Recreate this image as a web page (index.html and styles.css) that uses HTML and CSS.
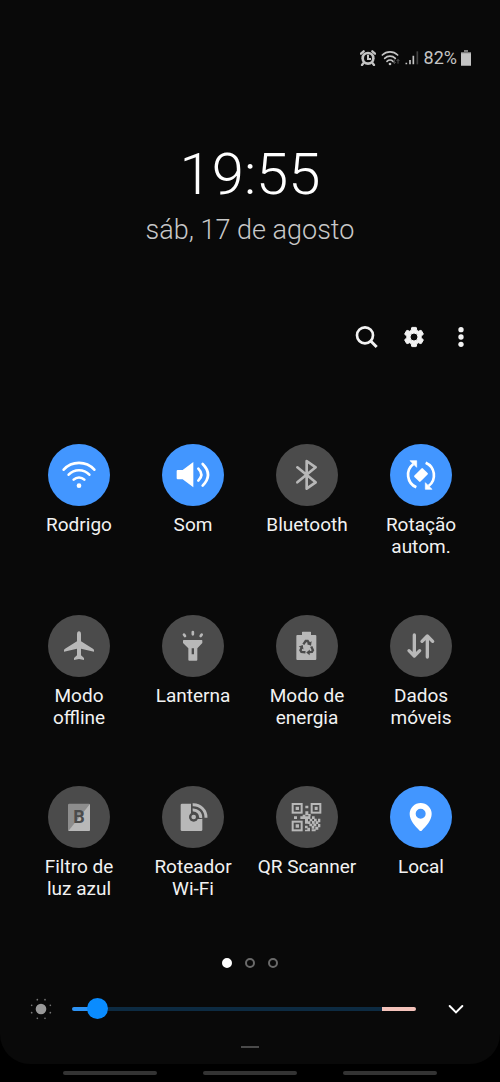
FILE: index.html
```html
<!DOCTYPE html>
<html lang="pt-BR">
<head>
<meta charset="utf-8">
<meta name="viewport" content="width=device-width, initial-scale=1">
<title>Painel rápido</title>
<link rel="stylesheet" href="styles.css">
</head>
<body>
<main class="panel">
  <header class="status">
    <svg class="status-alarm" viewBox="0 0 48 48" width="16" height="16" aria-hidden="true">
      <circle cx="24" cy="25" r="20" fill="currentColor"/>
      <path d="M3 11L11 4M45 11L37 4M10 40L6 45M38 40L42 45" stroke="currentColor" stroke-width="7" stroke-linecap="round"/>
      <circle cx="24" cy="25" r="12" fill="#090909"/>
      <path d="M24 14V27H33" fill="none" stroke="currentColor" stroke-width="6"/>
    </svg>
    <svg class="status-wifi" viewBox="0 0 57 48" width="19" height="16" aria-hidden="true">
      <g fill="none" stroke="currentColor" stroke-width="5" stroke-linecap="round">
        <path d="M4 15A33 33 0 0 1 50 15M11 25A23 23 0 0 1 43 25M18 34A13 13 0 0 1 36 34"/>
      </g>
      <circle cx="27" cy="42" r="4" fill="currentColor"/>
      <path d="M40 28V40M36 36L40 41L44 36M51 41V29M47 33L51 28L55 33" fill="none" stroke="#555" stroke-width="3"/>
    </svg>
    <svg class="status-signal" viewBox="0 0 42 48" width="14" height="16" aria-hidden="true">
      <path d="M4 38V43M15 30V43M25 17V43" stroke="currentColor" stroke-width="5"/>
      <path d="M37 4V43" stroke="#444" stroke-width="5"/>
    </svg>
    <span class="status-text">82%</span>
    <svg viewBox="0 0 30 48" width="10" height="16" aria-hidden="true">
      <path d="M9 1H21V6H30V47H0V6H9Z" fill="currentColor"/>
      <path d="M9 1H21V6H30V10H0V6H9Z" fill="#777"/>
    </svg>
  </header>

  <section class="clock">
    <time class="clock-time">19:55</time>
    <p class="clock-date">sáb, 17 de agosto</p>
  </section>

  <nav class="actions" aria-label="Ações">
    <button class="action" type="button" aria-label="Pesquisar">
      <svg viewBox="0 0 72 72" width="24" height="24"><circle cx="30" cy="31" r="24" fill="none" stroke="currentColor" stroke-width="8"/><path d="M47 48L65 66" stroke="currentColor" stroke-width="9"/></svg>
    </button>
    <button class="action" type="button" aria-label="Configurações">
      <svg viewBox="0 0 24 24" width="24" height="24"><path fill="currentColor" stroke="currentColor" stroke-width="1" stroke-linejoin="round" d="M19.14 12.94c.04-.3.06-.61.06-.94 0-.32-.02-.64-.07-.94l2.03-1.580c.18-.14.23-.41.12-.61l-1.920-3.320c-.12-.22-.37-.29-.59-.22l-2.390.96c-.5-.38-1.030-.7-1.620-.94l-.36-2.540c-.04-.24-.24-.41-.48-.41h-3.840c-.24 0-.43.17-.47.41l-.36 2.540c-.59.24-1.130.57-1.620.94l-2.390-.96c-.22-.08-.47 0-.59.22L2.740 8.870c-.12.21-.08.47.12.61l2.030 1.580c-.05.3-.09.63-.09.94s.02.64.07.94l-2.030 1.580c-.18.14-.23.41-.12.61l1.920 3.320c.12.22.37.29.59.22l2.390-.96c.5.38 1.030.7 1.620.94l.36 2.540c.05.24.24.41.48.41h3.840c.24 0 .44-.17.47-.41l.36-2.540c.59-.24 1.130-.56 1.620-.94l2.390.96c.22.08.47 0 .59-.22l1.920-3.320c.12-.22.07-.47-.12-.61l-2.010-1.580zM12 16a4 4 0 1 1 0-8 4 4 0 0 1 0 8z"/></svg>
    </button>
    <button class="action" type="button" aria-label="Mais opções">
      <svg viewBox="0 0 72 72" width="24" height="24" fill="currentColor"><circle cx="36" cy="14" r="8"/><circle cx="36" cy="36" r="8"/><circle cx="36" cy="58" r="8"/></svg>
    </button>
  </nav>

  <section class="tiles" aria-label="Configurações rápidas">
    <button class="tile tile-on" type="button" aria-pressed="true">
      <svg class="tile-icon" viewBox="0 0 186 186" aria-hidden="true">
        <path d="M47 77A62 62 0 0 1 139 77M62 92A43 43 0 0 1 124 92M77 107A23 23 0 0 1 109 107" fill="none" stroke="currentColor" stroke-width="8" stroke-linecap="round"/>
        <circle cx="93" cy="125" r="7" fill="currentColor"/>
      </svg>
      <span class="tile-label">Rodrigo</span>
    </button>
    <button class="tile tile-on" type="button" aria-pressed="true">
      <svg class="tile-icon" viewBox="0 0 186 186" aria-hidden="true">
        <path d="M47 78H62L94 54V130L62 106H47Q44 106 44 103V81Q44 78 47 78Z" fill="currentColor"/>
        <path d="M109 74Q127 92 109 110M122 60Q154 92 122 125" fill="none" stroke="currentColor" stroke-width="8" stroke-linecap="round"/>
      </svg>
      <span class="tile-label">Som</span>
    </button>
    <button class="tile" type="button" aria-pressed="false">
      <svg class="tile-icon" viewBox="0 0 186 186" aria-hidden="true">
        <path d="M64 70L119 115L92 134V51L119 70L64 115" fill="none" stroke="currentColor" stroke-width="8" stroke-linecap="round" stroke-linejoin="round"/>
      </svg>
      <span class="tile-label">Bluetooth</span>
    </button>
    <button class="tile tile-on" type="button" aria-pressed="true">
      <svg class="tile-icon" viewBox="0 0 186 186" aria-hidden="true">
        <rect x="75" y="80" width="36" height="26" rx="3" transform="rotate(-45 93 93)" fill="currentColor"/>
        <g id="turn">
          <path d="M79 130A41 41 0 0 1 70 60" fill="none" stroke="currentColor" stroke-width="8"/>
          <path d="M60 50H80V70Z" fill="currentColor" stroke="currentColor" stroke-width="2" stroke-linejoin="round"/>
        </g>
        <use href="#turn" transform="rotate(180 93 93)"/>
      </svg>
      <span class="tile-label">Rotação autom.</span>
    </button>

    <button class="tile" type="button" aria-pressed="false">
      <svg class="tile-icon" viewBox="0 0 186 186" aria-hidden="true">
        <path d="M93 49Q99 49 99 59V79L136 102Q139 104 138 110L99 101V121L108 129V135L93 132L78 135V129L87 121V101L48 110Q47 104 50 102L87 79V59Q87 49 93 49Z" fill="currentColor"/>
      </svg>
      <span class="tile-label">Modo offline</span>
    </button>
    <button class="tile" type="button" aria-pressed="false">
      <svg class="tile-icon" viewBox="0 0 186 186" aria-hidden="true">
        <path fill-rule="evenodd" d="M65 75H119Q121 75 121 77V84L106 100V134Q106 137 103 137H82Q79 137 79 134V100L63 84V77Q63 75 65 75ZM89 100V118H96V100Z" fill="currentColor"/>
        <path d="M92.500 51V58M66 59L69 63M119 59L116 63" stroke="currentColor" stroke-width="8" stroke-linecap="round"/>
      </svg>
      <span class="tile-label">Lanterna</span>
    </button>
    <button class="tile" type="button" aria-pressed="false">
      <svg class="tile-icon" viewBox="0 0 186 186" aria-hidden="true">
        <path d="M80 50H103Q105 50 105 52V60H118Q121 60 121 63V132Q121 135 118 135H64Q61 135 61 132V63Q61 60 64 60H78V52Q78 50 80 50Z" fill="currentColor"/>
        <g id="recycle" fill="none" stroke="#4b4b4b" stroke-width="7">
          <path d="M82 88L89 78H95L101 87"/>
          <path d="M92 87L105 92L107 79Z" fill="#4b4b4b" stroke="none"/>
        </g>
        <use href="#recycle" transform="rotate(120 92 98)"/>
        <use href="#recycle" transform="rotate(240 92 98)"/>
      </svg>
      <span class="tile-label">Modo de energia</span>
    </button>
    <button class="tile" type="button" aria-pressed="false">
      <svg class="tile-icon" viewBox="0 0 186 186" aria-hidden="true">
        <path d="M73 60V122M57 107L73 123L89 107M112 126V64M96 79L112 63L128 79" fill="none" stroke="currentColor" stroke-width="10" stroke-linecap="round" stroke-linejoin="round"/>
      </svg>
      <span class="tile-label">Dados móveis</span>
    </button>

    <button class="tile" type="button" aria-pressed="false">
      <svg class="tile-icon" viewBox="0 0 186 186" aria-hidden="true">
        <rect x="60" y="53" width="66" height="82" rx="4" fill="#8d8d8d"/>
        <path d="M126 54V131Q126 135 122 135H61Z" fill="currentColor"/>
        <text class="tile-letter" x="93" y="112" text-anchor="middle">B</text>
      </svg>
      <span class="tile-label">Filtro de luz&nbsp;azul</span>
    </button>
    <button class="tile" type="button" aria-pressed="false">
      <svg class="tile-icon" viewBox="0 0 186 186" aria-hidden="true">
        <rect x="56" y="53" width="65" height="82" rx="4" fill="currentColor"/>
        <path d="M87 50H136V99H95L87 85Z" fill="#4b4b4b"/>
        <circle cx="95" cy="93" r="14" fill="#4b4b4b"/>
        <circle cx="95" cy="93" r="7" fill="currentColor"/>
        <path d="M92 72A22 22 0 0 1 116 96M92 56A38 38 0 0 1 132 95" fill="none" stroke="currentColor" stroke-width="9"/>
      </svg>
      <span class="tile-label">Roteador Wi-Fi</span>
    </button>
    <button class="tile" type="button" aria-pressed="false">
      <svg class="tile-icon" viewBox="0 0 186 186" aria-hidden="true">
        <g fill="none" stroke="currentColor" stroke-width="6"><rect x="50" y="54" width="27" height="26"/><rect x="107" y="54" width="26" height="26"/><rect x="50" y="107" width="27" height="26"/></g>
        <path fill="currentColor" d="M59 62h10v10h-10zM116 62h9v10h-9zM59 115h10v10h-10zM88 59h9v8h-9zM88 76h9v12h-9zM54 91h9v8h-9zM73 91h30v8h-30zM108 91h8v8h-8zM80 86h8v7h-8zM97 84h7v7h-7zM87 98h9v15h-9zM101 98h8v8h-8zM114 98h8v8h-8zM126 98h7v11h-7zM95 106h8v8h-8zM108 105h8v8h-8zM119 106h8v8h-8zM87 119h8v8h-8zM100 113h9v8h-9zM112 113h9v8h-9zM126 114h7v10h-7zM94 125h8v11h-8zM107 120h8v8h-8zM118 122h9v9h-9zM107 130h12v6h-12zM87 131h7v5h-7z"/>
      </svg>
      <span class="tile-label">QR Scanner</span>
    </button>
    <button class="tile tile-on" type="button" aria-pressed="true">
      <svg class="tile-icon" viewBox="0 0 186 186" aria-hidden="true">
        <path fill-rule="evenodd" d="M92 51A33 33 0 0 1 125 84C125 103 109 120 95 134Q92 136 89 134C75 120 59 103 59 84A33 33 0 0 1 92 51ZM92 68A15 15 0 1 0 92 98A15 15 0 1 0 92 68Z" fill="currentColor"/>
      </svg>
      <span class="tile-label">Local</span>
    </button>
  </section>

  <div class="pages" aria-label="Página 1 de 3">
    <span class="page page-current"></span>
    <span class="page"></span>
    <span class="page"></span>
  </div>

  <div class="brightness">
    <svg viewBox="0 0 66 66" width="22" height="22" aria-hidden="true">
      <circle cx="33" cy="33" r="16" fill="#999"/>
      <g fill="#777"><circle cx="22" cy="5" r="2.500"/><circle cx="45" cy="5" r="2.500"/><circle cx="5" cy="22" r="2.500"/><circle cx="61" cy="22" r="2.500"/><circle cx="5" cy="44" r="2.500"/><circle cx="61" cy="44" r="2.500"/><circle cx="22" cy="61" r="2.500"/><circle cx="45" cy="61" r="2.500"/></g>
    </svg>
    <input class="slider" type="range" min="0" max="1000" value="45" aria-label="Brilho">
    <button class="expand" type="button" aria-label="Expandir">
      <svg viewBox="0 0 48 48" width="16" height="16"><path d="M5 15L24 34L43 15" fill="none" stroke="currentColor" stroke-width="6" stroke-linecap="round"/></svg>
    </button>
  </div>
  <div class="handle"></div>
</main>
<footer class="gestures">
  <span class="gesture"></span>
  <span class="gesture"></span>
  <span class="gesture"></span>
</footer>
</body>
</html>
```
FILE: styles.css
```css
* {
  box-sizing: border-box;
}

body {
  margin: 0;
  min-height: 100vh;
  display: flex;
  flex-direction: column;
  background: #000;
  color: #f2f2f2;
  font-family: Roboto, "Liberation Sans", sans-serif;
}

button {
  margin: 0;
  padding: 0;
  border: 0;
  background: none;
  color: inherit;
  font: inherit;
}

svg {
  display: block;
  flex: none;
}

.panel {
  flex: 1;
  display: flex;
  flex-direction: column;
  padding-top: 46px;
  border-radius: 0 0 30px 30px;
  background: #090909;
}

.status {
  display: flex;
  justify-content: flex-end;
  align-items: center;
  gap: 5px;
  height: 24px;
  padding-right: 29px;
  color: #c4c4c4;
}

.status-text {
  margin-right: -1px;
  font-size: 18px;
  line-height: 24px;
}

.clock {
  display: flex;
  flex-direction: column;
  align-items: center;
  padding-top: 68px;
}

.clock-time {
  color: #fff;
  font-size: 58px;
  font-weight: 300;
  line-height: 72px;
}

.clock-date {
  margin: 4px 0 0;
  color: #c8c8c8;
  font-size: 27px;
  font-weight: 300;
  line-height: 32px;
}

.actions {
  display: flex;
  justify-content: flex-end;
  margin-top: 67px;
  padding-right: 16px;
}

.action {
  display: grid;
  place-items: center;
  width: 47px;
  height: 48px;
}

.tiles {
  display: grid;
  grid-template-columns: repeat(4, 1fr);
  grid-auto-rows: minmax(171px, auto);
  margin-top: 83px;
  padding: 0 22px;
}

.tile {
  display: flex;
  flex-direction: column;
  align-items: center;
  gap: 8px;
  color: #b8b8b8;
}

.tile-icon {
  width: 62px;
  height: 62px;
  border-radius: 50%;
  background: #4b4b4b;
}

.tile-on {
  color: #fff;
}

.tile-on .tile-icon {
  background: #4296ff;
}

.tile-letter {
  fill: #4b4b4b;
  font-size: 54px;
  font-weight: 700;
}

.tile-label {
  max-width: 100px;
  color: #f2f2f2;
  font-size: 19px;
  line-height: 22px;
  text-align: center;
}

.pages {
  display: flex;
  justify-content: center;
  gap: 13px;
  margin-top: 1px;
}

.page {
  width: 10px;
  height: 10px;
  border: 2px solid #6a6a6a;
  border-radius: 50%;
}

.page-current {
  border-color: #fff;
  background: #fff;
}

.brightness {
  display: flex;
  align-items: center;
  margin-top: 29px;
  padding: 0 36px 0 30px;
}

.slider {
  flex: 1;
  min-width: 0;
  height: 24px;
  margin: 0 32px 0 20px;
  appearance: none;
  background: none;
}

.slider::-webkit-slider-runnable-track {
  height: 4px;
  border-radius: 2px;
  background: linear-gradient(to right, #2d93f5 7%, #0d2b42 7%, #0d2b42 90%, #f3c2ba 90%);
}

.slider::-webkit-slider-thumb {
  appearance: none;
  width: 21px;
  height: 21px;
  margin-top: -9px;
  border-radius: 50%;
  background: #0a8cff;
}

.expand {
  color: #fff;
}

.handle {
  align-self: center;
  width: 18px;
  height: 2px;
  margin-top: 25px;
  background: #4a4a4a;
}

.gestures {
  display: flex;
  justify-content: center;
  align-items: center;
  gap: 46px;
  height: 18px;
}

.gesture {
  width: 94px;
  height: 4px;
  border-radius: 2px;
  background: #333;
}
```
